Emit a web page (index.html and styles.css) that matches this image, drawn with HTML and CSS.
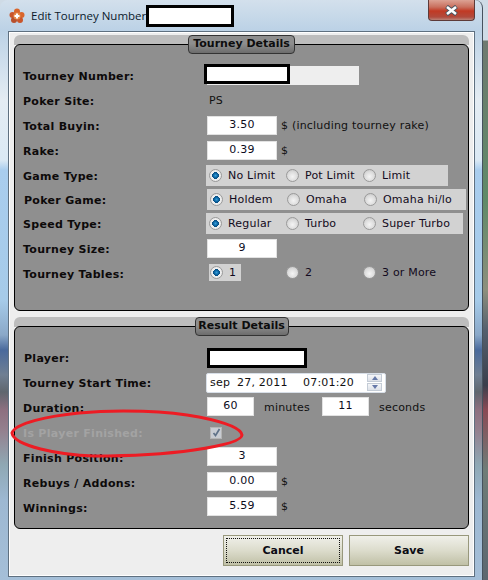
FILE: index.html
```html
<!DOCTYPE html>
<html lang="en">
  <head>
    <meta charset="UTF-8" />
    <title>Edit Tourney Number</title>
    <link rel="stylesheet" href="styles.css">
  </head>
  <body>
    <div class="window">
      <div class="titleBar">
        <svg class="appIcon" width="16" height="16" viewBox="0 0 16 16">
          <circle cx="8" cy="3.5" r="3" fill="#d9652b" />
          <circle cx="3.5" cy="7" r="3" fill="#c9552a" />
          <circle cx="12.5" cy="7" r="3" fill="#d9652b" />
          <circle cx="5" cy="12" r="3" fill="#b8502c" />
          <circle cx="11" cy="12" r="3" fill="#c9552a" />
          <circle cx="8" cy="8" r="3.6" fill="#e58a4a" />
          <path d="M8 5.5v5M5.5 8h5" stroke="#fff" stroke-width="2" />
        </svg>
        <span class="titleText">Edit Tourney Number</span>
        <span class="redact titleRedact"></span>
        <div class="closeBtn">
          <svg width="15" height="11" viewBox="0 0 15 11">
            <path d="M2.5 1.5l10 8M12.5 1.5l-10 8" stroke="#4a5560" stroke-width="4.4" />
            <path d="M3 2l9 7M12 2l-9 7" stroke="#fff" stroke-width="2.6" />
          </svg>
        </div>
      </div>

      <div class="client">
        <section class="group">
          <div class="legend legendTourney">Tourney Details</div>
          <div class="panel panelTourney">
            <div class="row">
              <label class="rowLabel">Tourney Number:</label>
              <div class="readonlyField"><span class="redact numberRedact"></span></div>
            </div>
            <div class="row">
              <label class="rowLabel">Poker Site:</label>
              <span class="plain siteValue">PS</span>
            </div>
            <div class="row">
              <label class="rowLabel">Total Buyin:</label>
              <span class="field">3.50</span>
              <span class="plain unit">$ (including tourney rake)</span>
            </div>
            <div class="row">
              <label class="rowLabel">Rake:</label>
              <span class="field">0.39</span>
              <span class="plain unit">$</span>
            </div>
            <div class="row">
              <label class="rowLabel">Game Type:</label>
              <div class="radioGroup shiftLeft gameType">
                <span class="option"><i class="radio on"></i>No Limit</span>
                <span class="option"><i class="radio"></i>Pot Limit</span>
                <span class="option"><i class="radio"></i>Limit</span>
              </div>
            </div>
            <div class="row short">
              <label class="rowLabel nudge">Poker Game:</label>
              <div class="radioGroup pokerGame">
                <span class="option"><i class="radio on"></i>Holdem</span>
                <span class="option"><i class="radio"></i>Omaha</span>
                <span class="option"><i class="radio"></i>Omaha hi/lo</span>
              </div>
            </div>
            <div class="row">
              <label class="rowLabel">Speed Type:</label>
              <div class="radioGroup shiftLeft speedType">
                <span class="option"><i class="radio on"></i>Regular</span>
                <span class="option"><i class="radio"></i>Turbo</span>
                <span class="option"><i class="radio"></i>Super Turbo</span>
              </div>
            </div>
            <div class="row">
              <label class="rowLabel">Tourney Size:</label>
              <span class="field">9</span>
            </div>
            <div class="row short">
              <label class="rowLabel low">Tourney Tables:</label>
              <div class="tablesGroup">
                <span class="option first"><i class="radio on"></i>1</span>
                <span class="option"><i class="radio"></i>2</span>
                <span class="option"><i class="radio"></i>3 or More</span>
              </div>
            </div>
          </div>
        </section>

        <section class="group">
          <div class="legend legendResult">Result Details</div>
          <div class="panel panelResult">
            <div class="row">
              <label class="rowLabel nudge">Player:</label>
              <span class="redact playerRedact"></span>
            </div>
            <div class="row">
              <label class="rowLabel">Tourney Start Time:</label>
              <div class="dateField">
                <span class="dateMonth">sep</span>
                <span class="dateDay">27, 2011</span>
                <span class="dateTime">07:01:20</span>
                <div class="spinner">
                  <span class="spinBtn"><i class="arrowUp"></i></span>
                  <span class="spinBtn"><i class="arrowDown"></i></span>
                </div>
              </div>
            </div>
            <div class="row short">
              <label class="rowLabel low">Duration:</label>
              <span class="field small">60</span>
              <span class="plain durationUnit">minutes</span>
              <span class="field small">11</span>
              <span class="plain durationUnit">seconds</span>
            </div>
            <div class="row finished">
              <label class="rowLabel low disabled">Is Player Finished:</label>
              <span class="checkbox">
                <svg width="9" height="9" viewBox="0 0 9 9">
                  <path d="M1.5 5l2 2.5L7.5 1" fill="none" stroke="#5f7288" stroke-width="1.7" />
                </svg>
              </span>
            </div>
            <div class="row">
              <label class="rowLabel low">Finish Position:</label>
              <span class="field">3</span>
            </div>
            <div class="row">
              <label class="rowLabel low">Rebuys / Addons:</label>
              <span class="field">0.00</span>
              <span class="plain unit">$</span>
            </div>
            <div class="row">
              <label class="rowLabel low">Winnings:</label>
              <span class="field">5.59</span>
              <span class="plain unit">$</span>
            </div>
          </div>
        </section>

        <div class="buttons">
          <button class="btn focused"><span>Cancel</span></button>
          <button class="btn"><span>Save</span></button>
        </div>
      </div>

      <!-- red marker drawn over the screenshot -->
      <svg class="marker" width="260" height="60" viewBox="0 0 260 60">
        <path d="M3 25C6 15 40 8 70 5C110 1 160 3 190 9C215 14 232 20 233 27C233 33 212 38 185 42C150 47 115 48 85 48C50 47 5 38 3 25Z" fill="none" stroke="#ed1c24" stroke-width="3" />
      </svg>
    </div>
  </body>
</html>
```

FILE: styles.css
```css
html, body {
  margin: 0;
  padding: 0;
}
body {
  width: 488px;
  height: 580px;
  overflow: hidden;
  font-family: "DejaVu Sans", sans-serif;
  font-size: 11px;
  color: #111;
  background: linear-gradient(to bottom, #cfdbe6 0, #cfdbe6 40px, #6f7a70 41px, #5f8a68 200px, #8d8f7d 290px, #55606e 330px, #3a3f4c 385px, #8a4a55 410px, #6f7d78 470px, #5c6770 580px);
}
.window {
  position: relative;
  box-sizing: border-box;
  width: 483px;
  height: 580px;
  padding: 0 7px 0 8px;
  border-right: 1px solid #46525e;
  border-radius: 8px 8px 0 0;
  background: linear-gradient(to bottom, #d3e0ec 0, #bcd2e6 30px, #e4ecf3 100px, #dbe9f4 160px, #a9cdee 170px, #a6cbe9 300px, #8aa8c8 335px, #4a6a9c 350px, #6f7f92 375px, #5f666e 392px, #8d7080 410px, #94808e 430px, #8fa8b4 465px, #9db8d2 500px, #a5bfd8 580px);
}
.titleBar {
  display: flex;
  align-items: center;
  height: 31px;
}
.appIcon {
  margin: 0 6px 0 1px;
}
.titleText {
  flex: none;
  width: 114px;
  font-family: "Open Sans", sans-serif;
  font-size: 11.5px;
  color: #0c1a2c;
  white-space: nowrap;
}
.redact {
  display: block;
  box-sizing: border-box;
  background: #fff;
  border: 3px solid #000;
}
.titleRedact {
  width: 88px;
  height: 22px;
  margin-left: 1px;
  margin-top: 1px;
}
.closeBtn {
  display: flex;
  align-items: center;
  justify-content: center;
  box-sizing: border-box;
  width: 47px;
  height: 21px;
  margin: -10px 0 0 auto;
  border: 1px solid #5d3a38;
  border-top: none;
  border-radius: 0 0 4px 4px;
  background: linear-gradient(to bottom, #dca294 0, #c9705e 35%, #c13a24 55%, #b14a3c 85%, #b98378 100%);
}
.client {
  box-sizing: border-box;
  height: 546px;
  padding: 3px 5px 0;
  background: #eee;
  border: 1px solid #5f7080;
  box-shadow: inset 0 0 0 1px #fff;
}
.group {
  display: flex;
  flex-direction: column;
  align-items: center;
  margin-bottom: 6px;
  border-radius: 6px 6px 0 0;
  background: linear-gradient(to bottom, #bdbdbd 0, #bdbdbd 10px, transparent 10px);
}
.legend {
  position: relative;
  z-index: 1;
  box-sizing: border-box;
  height: 19px;
  margin-bottom: -10px;
  border: 1px solid #333;
  border-radius: 4px;
  background: linear-gradient(to bottom, #8e8e8e 0, #8e8e8e 45%, #6c6c6c 100%);
  font-weight: bold;
  line-height: 16px;
  text-align: center;
  color: #0d0d0d;
}
.legendTourney {
  width: 107px;
}
.legendResult {
  width: 94px;
}
.panel {
  box-sizing: border-box;
  width: 100%;
  border: 1px solid #000;
  border-radius: 6px;
  background: #8f8f8f;
}
.panelTourney {
  height: 267px;
  padding: 18px 0 0 8px;
}
.panelResult {
  height: 203px;
  padding: 18px 0 0 8px;
}
.row {
  display: flex;
  align-items: center;
  height: 25px;
}
.row.short {
  height: 23px;
}
.row.finished {
  height: 26px;
}
.rowLabel {
  flex: none;
  width: 184px;
  padding-top: 2px;
  font-weight: bold;
  letter-spacing: 0.3px;
  color: #0d0a0a;
  white-space: nowrap;
}
.rowLabel.low {
  padding-top: 4px;
}
.rowLabel.nudge {
  width: 183px;
  padding-left: 1px;
}
.rowLabel.disabled {
  color: #a3a3a3;
}
.plain {
  white-space: nowrap;
  letter-spacing: 0.2px;
}
.siteValue {
  margin-left: 2px;
}
.unit {
  margin-left: 4px;
}
.durationUnit {
  width: 58px;
  margin-left: 10px;
  margin-top: 1px;
}
.field {
  flex: none;
  box-sizing: border-box;
  width: 70px;
  height: 19px;
  border: 1px solid #e2e2e2;
  background: #fff;
  line-height: 15px;
  text-align: center;
  letter-spacing: 0.2px;
  color: #0c0c1c;
}
.field.small {
  width: 47px;
}
.readonlyField {
  width: 152px;
  height: 19px;
  background: #eee;
}
.numberRedact {
  width: 86px;
  height: 20px;
  margin: -2px 0 0 -3px;
  border-width: 3px;
}
.playerRedact {
  width: 100px;
  height: 20px;
}
.radioGroup {
  display: flex;
  align-items: center;
  box-sizing: border-box;
  height: 21px;
  padding-left: 3px;
  background: #d2d2d2;
}
.shiftLeft {
  margin-left: -1px;
}
.gameType {
  width: 242px;
}
.pokerGame {
  width: 259px;
}
.speedType {
  width: 257px;
}
.tablesGroup {
  display: flex;
  align-items: center;
  padding-left: 2px;
}
.option {
  display: flex;
  align-items: center;
  flex: none;
  width: 77px;
  letter-spacing: 0.2px;
  white-space: nowrap;
  color: #120a20;
}
.option.first {
  box-sizing: border-box;
  width: 32px;
  height: 17px;
  margin-right: 45px;
  padding-left: 1px;
  background: #d2d2d2;
}
.radio {
  flex: none;
  box-sizing: border-box;
  width: 13px;
  height: 13px;
  margin-right: 6px;
  border: 1px solid #9a9a9a;
  border-radius: 50%;
  background: radial-gradient(circle at 50% 60%, #f4f4f4 0, #dcdcdc 55%, #bdbdbd 100%);
}
.radio.on {
  background: radial-gradient(circle at 50% 50%, #35a0dc 0, #0f6aa8 25%, #074c80 42%, #f0f0f0 46%, #e0e0e0 100%);
}
.dateField {
  position: relative;
  display: flex;
  align-items: center;
  box-sizing: border-box;
  width: 180px;
  height: 20px;
  margin-left: -1px;
  border: 1px solid #d8dfe8;
  border-radius: 2px;
  background: #fff;
  letter-spacing: 0.2px;
  white-space: nowrap;
}
.dateMonth {
  width: 27px;
  margin-left: 3px;
}
.dateDay {
  width: 66px;
}
.dateTime {
  width: 64px;
}
.spinner {
  display: flex;
  flex-direction: column;
  gap: 1px;
  width: 15px;
}
.spinBtn {
  display: flex;
  align-items: center;
  justify-content: center;
  box-sizing: border-box;
  height: 8px;
  border: 1px solid #c4ccd6;
  background: linear-gradient(to bottom, #f5f6f8, #dde1e8);
}
.arrowUp, .arrowDown {
  width: 0;
  height: 0;
  border-left: 3px solid transparent;
  border-right: 3px solid transparent;
}
.arrowUp {
  border-bottom: 4px solid #6679a8;
}
.arrowDown {
  border-top: 4px solid #6679a8;
}
.checkbox {
  display: flex;
  align-items: center;
  justify-content: center;
  box-sizing: border-box;
  width: 12px;
  height: 12px;
  margin: 3px 0 0 3px;
  border: 1px solid #b4b4b4;
  background: #c8ccd2;
}
.buttons {
  display: flex;
  justify-content: flex-end;
  gap: 6px;
}
.btn {
  box-sizing: border-box;
  width: 120px;
  height: 31px;
  padding: 0;
  border: 1px solid #98987c;
  background: linear-gradient(to bottom, #f0f0ea 0, #dcdccc 50%, #c0c0a6 100%);
  font-family: "DejaVu Sans", sans-serif;
  font-size: 11px;
  font-weight: bold;
  color: #0c0c14;
}
.btn.focused {
  padding: 2px;
}
.btn.focused span {
  display: block;
  box-sizing: border-box;
  height: 100%;
  line-height: 23px;
  border: 1px dotted #111;
}
.marker {
  position: absolute;
  left: 9px;
  top: 408px;
}
```
